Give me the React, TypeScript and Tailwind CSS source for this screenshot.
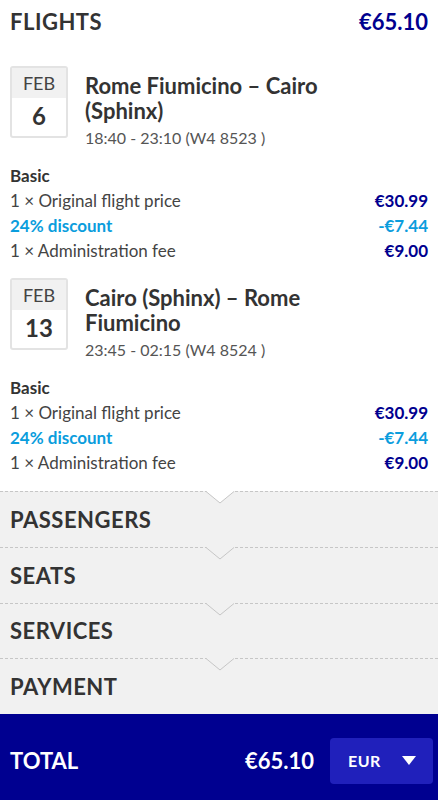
const font = { fontFamily: "Lato, 'Noto Sans', sans-serif" }

type Flight = {
  month: string
  day: string
  from: string
  to: string
  time: string
}

const flights: Flight[] = [
  { month: "FEB", day: "6", from: "Rome Fiumicino – Cairo", to: "(Sphinx)", time: "18:40 - 23:10 (W4 8523 )" },
  { month: "FEB", day: "13", from: "Cairo (Sphinx) – Rome", to: "Fiumicino", time: "23:45 - 02:15 (W4 8524 )" },
]

function FlightBlock({ f, first }: { f: Flight; first?: boolean }) {
  return (
    <div className={first ? "mt-[24px]" : "mt-[15px]"}>
      <div className="flex">
        <div className="w-[58px] h-[72px] shrink-0 border-2 border-[#e3e3e3] rounded-[3px] overflow-hidden flex flex-col">
          <div className="h-[31px] bg-[#f1f1f1] flex items-center justify-center text-[18px] text-[#444]">{f.month}</div>
          <div className="flex-1 flex items-center justify-center text-[24px] font-bold text-[#333] pb-[2px]">{f.day}</div>
        </div>
        <div className="pl-[17px] pt-[7px]">
          <div className="text-[22px] leading-[25px] font-bold text-[#333]">
            {f.from}
            <br />
            {f.to}
          </div>
          <div className="mt-[2px] text-[16px] leading-[25px] text-[#555]">{f.time}</div>
        </div>
      </div>
      <div className="mt-[13px] text-[17px] leading-[25px]">
        <div className="font-bold text-[#333]">Basic</div>
        <div className="flex justify-between">
          <span className="text-[#444]">1 × Original flight price</span>
          <span className="font-bold text-[#00008f]">€30.99</span>
        </div>
        <div className="flex justify-between font-bold text-[#0a9ddd]">
          <span>24% discount</span>
          <span>-€7.44</span>
        </div>
        <div className="flex justify-between">
          <span className="text-[#444]">1 × Administration fee</span>
          <span className="font-bold text-[#00008f]">€9.00</span>
        </div>
      </div>
    </div>
  )
}

function Step({ label, prevFill }: { label: string; prevFill: string }) {
  return (
    <div className="relative flex-1 bg-[#f1f1f1] border-t border-dashed border-[#c6c6c6] flex items-center px-[10px]">
      <svg className="absolute left-[206px] -top-[1px]" width="28" height="13" viewBox="0 0 28 13">
        <polygon points="0,0 14,12 28,0" fill={prevFill} />
        <polyline points="0,0.5 14,12 28,0.5" fill="none" stroke="#c6c6c6" strokeWidth="1" />
      </svg>
      <span className="text-[22px] font-bold text-[#333] tracking-[0.5px]">{label}</span>
    </div>
  )
}

export default function App() {
  return (
    <div className="w-[438px] h-[800px] bg-white flex flex-col overflow-hidden" style={font}>
      <div className="px-[10px] pb-[16px]">
        <div className="h-[42px] flex items-center justify-between">
          <span className="text-[22px] font-bold text-[#333] tracking-[0.5px]">FLIGHTS</span>
          <span className="text-[22px] font-bold text-[#00008f]">€65.10</span>
        </div>
        {flights.map((f, i) => (
          <FlightBlock key={i} f={f} first={i === 0} />
        ))}
      </div>
      <div className="flex-1 flex flex-col">
        <Step label="PASSENGERS" prevFill="#ffffff" />
        <Step label="SEATS" prevFill="#f1f1f1" />
        <Step label="SERVICES" prevFill="#f1f1f1" />
        <Step label="PAYMENT" prevFill="#f1f1f1" />
      </div>
      <div className="h-[86px] shrink-0 bg-[#000090] flex items-center px-[10px] pt-[7px]">
        <span className="text-[22px] font-bold text-white">TOTAL</span>
        <span className="ml-auto text-[22px] font-bold text-white">€65.10</span>
        <button className="ml-[16px] w-[103px] h-[46px] rounded-[4px] bg-[#2020bb] flex items-center justify-between pl-[18px] pr-[17px] mr-[-5px]">
          <span className="text-[16px] font-bold text-white tracking-[0.5px]">EUR</span>
          <svg width="14" height="10" viewBox="0 0 14 10">
            <polygon points="0,0 14,0 7,9" fill="#ffffff" />
          </svg>
        </button>
      </div>
    </div>
  )
}
